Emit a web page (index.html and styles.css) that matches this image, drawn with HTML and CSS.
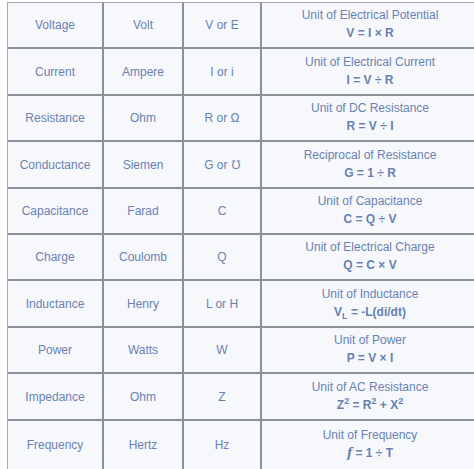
FILE: index.html
```html
<!DOCTYPE html>
<html>
<head>
<meta charset="utf-8">
<link rel="stylesheet" href="styles.css">
</head>
<body>
<div class="table">
  <div class="cell r1">Voltage</div><div class="cell r1">Volt</div><div class="cell r1">V or E</div>
  <div class="cell r1 desc"><span>Unit of Electrical Potential</span><b>V = I × R</b></div>

  <div class="cell r2">Current</div><div class="cell r2">Ampere</div><div class="cell r2">I or i</div>
  <div class="cell r2 desc"><span>Unit of Electrical Current</span><b>I = V ÷ R</b></div>

  <div class="cell r1">Resistance</div><div class="cell r1">Ohm</div><div class="cell r1">R or Ω</div>
  <div class="cell r1 desc"><span>Unit of DC Resistance</span><b>R = V ÷ I</b></div>

  <div class="cell r2">Conductance</div><div class="cell r2">Siemen</div><div class="cell r2">G or ℧</div>
  <div class="cell r2 desc"><span>Reciprocal of Resistance</span><b>G = 1 ÷ R</b></div>

  <div class="cell r1">Capacitance</div><div class="cell r1">Farad</div><div class="cell r1">C</div>
  <div class="cell r1 desc"><span>Unit of Capacitance</span><b>C = Q ÷ V</b></div>

  <div class="cell r1">Charge</div><div class="cell r1">Coulomb</div><div class="cell r1">Q</div>
  <div class="cell r1 desc"><span>Unit of Electrical Charge</span><b>Q = C × V</b></div>

  <div class="cell r2">Inductance</div><div class="cell r2">Henry</div><div class="cell r2">L or H</div>
  <div class="cell r2 desc"><span>Unit of Inductance</span><b>V<sub>L</sub> = -L(di/dt)</b></div>

  <div class="cell r1">Power</div><div class="cell r1">Watts</div><div class="cell r1">W</div>
  <div class="cell r1 desc"><span>Unit of Power</span><b>P = V × I</b></div>

  <div class="cell r2">Impedance</div><div class="cell r2">Ohm</div><div class="cell r2">Z</div>
  <div class="cell r2 desc"><span>Unit of AC Resistance</span><b>Z<sup>2</sup> = R<sup>2</sup> + X<sup>2</sup></b></div>

  <div class="cell r3">Frequency</div><div class="cell r3">Hertz</div><div class="cell r3">Hz</div>
  <div class="cell r3 desc"><span>Unit of Frequency</span><b><i>f</i> = 1 ÷ T</b></div>
</div>
</body>
</html>
```

FILE: styles.css
```css
html, body {
  margin: 0;
  padding: 0;
  background: #ffffff;
  overflow: hidden;
}

.table {
  display: grid;
  grid-template-columns: 96px 80px 78px 216px;
  margin: 2px 0 0 7px;
  border-top: 1px solid #a3a8b1;
  border-left: 1px solid #a3a8b1;
  width: 470px;
  font-family: "Liberation Sans", Arial, sans-serif;
  font-size: 12px;
  color: #6882b3;
}

.cell {
  background: #f7f8fb;
  border-right: 2px solid #8b909a;
  border-bottom: 2px solid #8b909a;
  display: flex;
  flex-direction: column;
  align-items: center;
  justify-content: center;
  text-align: center;
  box-sizing: border-box;
  line-height: 18px;
}

.r1 { height: 46px; }
.r2 { height: 47px; }
.r3 { height: 50px; }

.desc {
  padding-bottom: 2px;
  border-right: none;
}

.desc b {
  font-weight: bold;
  color: #6580b2;
}

sub, sup {
  font-size: 9px;
  line-height: 0;
}

sub { vertical-align: -3px; }
sup { vertical-align: 5px; }

.desc i {
  font-family: "DejaVu Serif", serif;
  font-style: italic;
}
```
